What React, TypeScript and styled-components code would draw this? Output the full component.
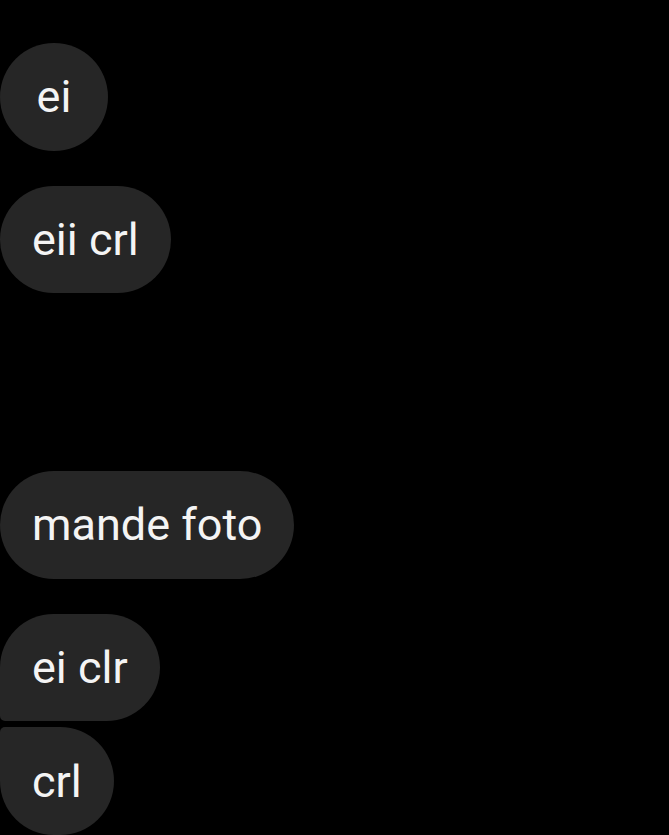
import React from "react";
import styled, { createGlobalStyle } from "styled-components";

const Global = createGlobalStyle`
  html, body { margin: 0; padding: 0; background: #000; }
  body { font-family: Roboto, "Noto Sans", sans-serif; }
`;

const Thread = styled.div`
  display: flex;
  flex-direction: column;
  align-items: flex-start;
  padding-top: 43px;
  height: 835px;
  overflow: hidden;
  box-sizing: border-box;
`;

type Pos = "single" | "first" | "last";

const Bubble = styled.div<{ $pos: Pos; $gap: number }>`
  margin-top: ${(p) => p.$gap}px;
  box-sizing: border-box;
  min-width: 108px;
  height: 108px;
  padding: 0 32px;
  display: flex;
  align-items: center;
  justify-content: center;
  background: #262626;
  color: #f4f4f4;
  font-size: 45px;
  font-weight: 400;
  white-space: nowrap;
  border-radius: ${(p) =>
    p.$pos === "first"
      ? "54px 54px 54px 5px"
      : p.$pos === "last"
      ? "5px 54px 54px 54px"
      : "54px"};
`;

const messages: { text: string; pos: Pos; gap: number }[] = [
  { text: "ei", pos: "single", gap: 0 },
  { text: "eii crl", pos: "single", gap: 35 },
  { text: "mande foto", pos: "single", gap: 178 },
  { text: "ei clr", pos: "first", gap: 35 },
  { text: "crl", pos: "last", gap: 6 },
];

export default function App() {
  return (
    <>
      <Global />
      <Thread>
        {messages.map((m, i) => (
          <Bubble key={i} $pos={m.pos} $gap={m.gap}>
            {m.text}
          </Bubble>
        ))}
      </Thread>
    </>
  );
}
